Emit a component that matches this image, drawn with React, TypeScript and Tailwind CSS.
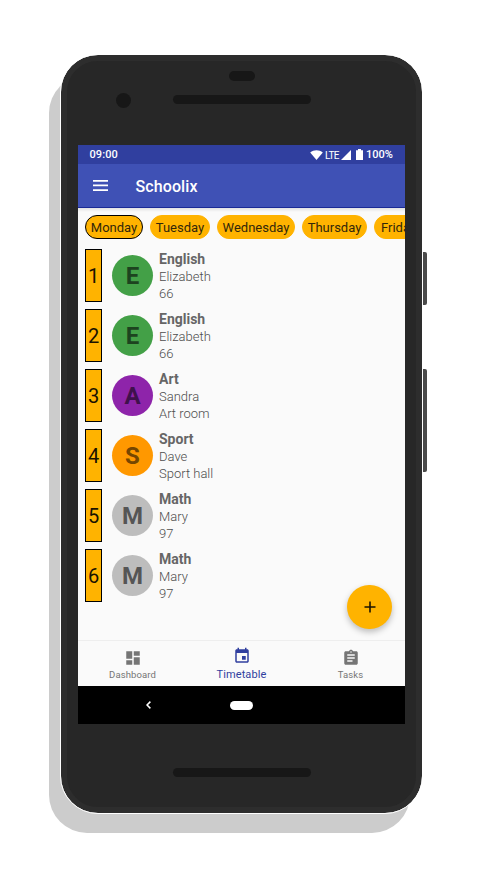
import React from "react";

type Lesson = { subject: string; teacher: string; room: string; circle: string; letter: string };

const days = [
  { name: "Monday", width: "w-[58px]", active: true },
  { name: "Tuesday", width: "w-[60px]", active: false },
  { name: "Wednesday", width: "w-[78px]", active: false },
  { name: "Thursday", width: "w-[65px]", active: false },
  { name: "Friday", width: "w-[49px]", active: false },
];

const lessons: Lesson[] = [
  { subject: "English", teacher: "Elizabeth", room: "66", circle: "bg-[#43a047]", letter: "text-[#1d431f]" },
  { subject: "English", teacher: "Elizabeth", room: "66", circle: "bg-[#43a047]", letter: "text-[#1d431f]" },
  { subject: "Art", teacher: "Sandra", room: "Art room", circle: "bg-[#8e24aa]", letter: "text-[#3f114c]" },
  { subject: "Sport", teacher: "Dave", room: "Sport hall", circle: "bg-[#ff9800]", letter: "text-[#754600]" },
  { subject: "Math", teacher: "Mary", room: "97", circle: "bg-[#bdbdbd]", letter: "text-[#555555]" },
  { subject: "Math", teacher: "Mary", room: "97", circle: "bg-[#bdbdbd]", letter: "text-[#555555]" },
];

function StatusBar() {
  return (
    <div className="flex h-[19px] items-center bg-[#303f9f] pl-[11px] pr-[12px] text-[11px] font-medium text-white">
      <span className="grow translate-x-[0.5px] translate-y-px tracking-[0.1px]">09:00</span>
      <svg className="h-[10px] w-[13px]" viewBox="0 0 13 10" fill="currentColor">
        <path d="M6.5 10 .2 2.5C3.800-.5 9.200-.5 12.800 2.500z" />
      </svg>
      <span className="ml-[2px] w-[14px] translate-y-px text-[10px] font-normal tracking-[-0.6px]">LTE</span>
      <svg className="ml-[2px] h-[10px] w-[10px]" viewBox="0 0 10 10" fill="currentColor">
        <path d="M10 0v10H0z" />
      </svg>
      <svg className="ml-[5px] h-[11px] w-[7px]" viewBox="0 0 7 11" fill="currentColor">
        <path d="M2 0h3v1.300h2V11H0V1.300h2z" />
      </svg>
      <span className="ml-[3px] w-[27px] translate-y-px">100%</span>
    </div>
  );
}

function AppBar() {
  return (
    <header className="flex h-[44px] items-center border-b border-[#1a2a96] bg-[#3f51b5] pl-[15px] text-white">
      <svg className="h-[11px] w-[15px]" viewBox="0 0 15 11" fill="currentColor">
        <path d="M0 0h15v1.700H0zM0 4.600h15v1.700H0zM0 9.200h15v1.700H0z" />
      </svg>
      <h1 className="ml-[27px] translate-x-[0.5px] translate-y-px text-[16px] font-medium tracking-[0.1px]">Schoolix</h1>
    </header>
  );
}

function NavItem({ label, icon, active }: { label: string; icon: string; active?: boolean }) {
  return (
    <div className={`flex flex-1 flex-col items-center ${active ? "pt-[6px] text-[#303f9f]" : "pt-[8px] text-[#757575]"}`}>
      <svg className="h-[18px] w-[18px]" viewBox="0 0 24 24" fill="currentColor">
        <path d={icon} />
      </svg>
      <span className={active ? "mt-[3px] text-[11px] leading-[13px] tracking-[0.1px]" : "mt-[2px] text-[9.500px] leading-[12px] tracking-[0.1px]"}>
        {label}
      </span>
    </div>
  );
}

export default function App() {
  return (
    <div className="flex h-[869px] w-[483px] items-start overflow-hidden bg-white pl-[61px] pt-[55px] font-[Roboto,sans-serif]">
      <div className="relative h-[758px] w-[361px]">
        <div className="absolute left-[-12px] top-[20px] h-[758px] w-[361px] rounded-[38px] bg-[#cccccc]" />
        <div className="absolute left-[361px] top-[197px] h-[53px] w-[5px] rounded-r-[2px] bg-[#4a4a4a]" />
        <div className="absolute left-[361px] top-[314px] h-[103px] w-[5px] rounded-r-[2px] bg-[#4a4a4a]" />

        <div className="relative flex h-full w-full flex-col items-center rounded-[37px] border-[6px] border-[#2d2d2d] bg-[#272727] outline outline-1 outline-white">
          <div className="flex h-[84px] w-full shrink-0 flex-col items-center pt-[10px]">
            <div className="h-[10px] w-[26px] rounded-full bg-[#171717]" />
            <div className="mt-[12px] flex w-full items-center pl-[49px]">
              <div className="h-[15px] w-[15px] rounded-full bg-[#171717]" />
              <div className="ml-[42px] h-[9px] w-[138px] -translate-y-px rounded-full bg-[#171717]" />
            </div>
          </div>

          <div className="relative flex h-[579px] w-[327px] shrink-0 flex-col overflow-hidden bg-[#fafafa]">
            <StatusBar />
            <AppBar />
            <div className="flex h-[38px] shrink-0 gap-[7px] overflow-hidden bg-[linear-gradient(to_bottom,#e2e2e2,#fafafa_4px)] pl-[7px] pt-[7px]">
              {days.map((d) => (
                <div
                  key={d.name}
                  className={`flex h-[24px] shrink-0 items-center justify-center rounded-full border-[1.500px] bg-[#ffb300] text-[13px] text-[#33270a] ${d.width} ${d.active ? "border-black" : "border-[#ffb300]"}`}
                >
                  <span className="translate-y-[0.500px]">{d.name}</span>
                </div>
              ))}
            </div>
            <main className="flex grow flex-col gap-[7px] pl-[7px] pt-[3px]">
              {lessons.map((l, i) => (
                <div key={i} className="flex h-[53px] shrink-0 items-center">
                  <div className="flex h-[53px] w-[17px] items-center justify-center border-[1.500px] border-black bg-[#ffb300] text-[20px] text-[#1a1200]">
                    {i + 1}
                  </div>
                  <div className={`ml-[10px] flex h-[41px] w-[41px] items-center justify-center rounded-full text-[24px] font-bold ${l.circle} ${l.letter}`}>
                    {l.subject[0]}
                  </div>
                  <div className="ml-[6px] translate-y-px text-[13px] font-light leading-[17.500px] text-[#4d4d4d]">
                    <div className="translate-y-[0.5px] text-[14px] font-bold tracking-normal text-[#666666]">{l.subject}</div>
                    <div>{l.teacher}</div>
                    <div>{l.room}</div>
                  </div>
                </div>
              ))}
            </main>
            <button className="absolute left-[269px] top-[440px] flex h-[44px] w-[45px] items-center justify-center rounded-full bg-[#ffb300] shadow-[0_3px_6px_rgba(0,0,0,0.25)]">
              <svg className="h-[12px] w-[12px]" viewBox="0 0 12 12" stroke="#1c1400" strokeWidth="1.600">
                <path d="M6 .5v11M.5 6h11" />
              </svg>
            </button>
            <nav className="flex h-[46px] shrink-0 border-t border-[#eeeeee] bg-[#fafafa]">
              <NavItem label="Dashboard" icon="M3 13h8V3H3v10zm0 8h8v-6H3v6zm10 0h8V11h-8v10zm0-18v6h8V3h-8z" />
              <NavItem
                active
                label="Timetable"
                icon="M17 12h-5v5h5v-5zM16 1v2H8V1H6v2H5c-1.110 0-1.990.9-1.990 2L3 19c0 1.100.89 2 2 2h14c1.100 0 2-.9 2-2V5c0-1.100-.9-2-2-2h-1V1h-2zm3 18H5V8h14v11z"
              />
              <NavItem
                label="Tasks"
                icon="M19 3h-4.180C14.400 1.840 13.300 1 12 1c-1.300 0-2.400.84-2.820 2H5c-1.100 0-2 .9-2 2v14c0 1.100.9 2 2 2h14c1.100 0 2-.9 2-2V5c0-1.100-.9-2-2-2zm-7 0c.55 0 1 .45 1 1s-.45 1-1 1-1-.45-1-1 .45-1 1-1zm2 14H7v-2h7v2zm3-4H7v-2h10v2zm0-4H7V7h10v2z"
              />
            </nav>
            <div className="flex h-[38px] shrink-0 items-center bg-black pl-[68px]">
              <svg className="h-[8px] w-[5px]" viewBox="0 0 5 8" fill="none" stroke="white" strokeWidth="1.500">
                <path d="M4.400.6 1 4l3.400 3.400" />
              </svg>
              <div className="ml-[79px] h-[9px] w-[23px] rounded-full bg-white" />
            </div>
          </div>

          <div className="mt-[44px] h-[9px] w-[138px] rounded-full bg-[#171717]" />
        </div>
      </div>
    </div>
  );
}
